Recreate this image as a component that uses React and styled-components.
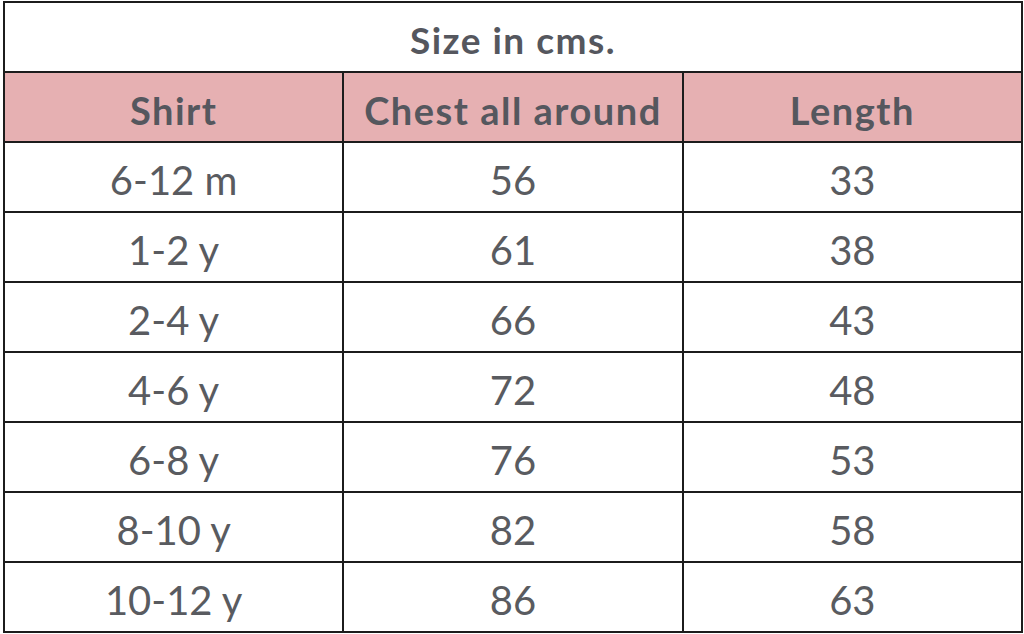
import React from "react";
import styled, { createGlobalStyle } from "styled-components";

const GlobalStyle = createGlobalStyle`
  html, body {
    margin: 0;
    padding: 0;
    background: #ffffff;
  }
  body {
    font-family: Lato, "Open Sans", "Liberation Sans", sans-serif;
  }
`;

const Sheet = styled.div`
  margin: 1px 0 0 3px;
  width: 1020px;
  display: grid;
  grid-template-columns: repeat(3, 1fr);
  grid-auto-rows: 68px;
  gap: 2px;
  padding: 2px;
  box-sizing: border-box;
  background: #1c1c1c;
`;

const Cell = styled.div`
  display: flex;
  align-items: center;
  justify-content: center;
  padding-top: 6px;
  box-sizing: border-box;
  background: ${({ $head }) => ($head ? "#e6b0b2" : "#ffffff")};
  color: #595b60;
  font-size: 40px;
  white-space: nowrap;
`;

const Title = styled(Cell)`
  grid-column: 1 / -1;
  padding-top: 4px;
  font-size: 37px;
  font-weight: 700;
  letter-spacing: 1.5px;
  color: #55575e;
`;

const Head = styled(Cell)`
  font-size: 38px;
  font-weight: 700;
  letter-spacing: 1.5px;
  color: #55575e;
`;

const ROWS = [
  ["6-12 m", "56", "33"],
  ["1-2 y", "61", "38"],
  ["2-4 y", "66", "43"],
  ["4-6 y", "72", "48"],
  ["6-8 y", "76", "53"],
  ["8-10 y", "82", "58"],
  ["10-12 y", "86", "63"],
];

const App = () => {
  return (
    <>
      <GlobalStyle />
      <Sheet>
        <Title>Size in cms.</Title>
        <Head $head>Shirt</Head>
        <Head $head>Chest all around</Head>
        <Head $head>Length</Head>
        {ROWS.map((row, i) =>
          row.map((val, j) => <Cell key={i + "-" + j}>{val}</Cell>)
        )}
      </Sheet>
    </>
  );
};

export default App;
